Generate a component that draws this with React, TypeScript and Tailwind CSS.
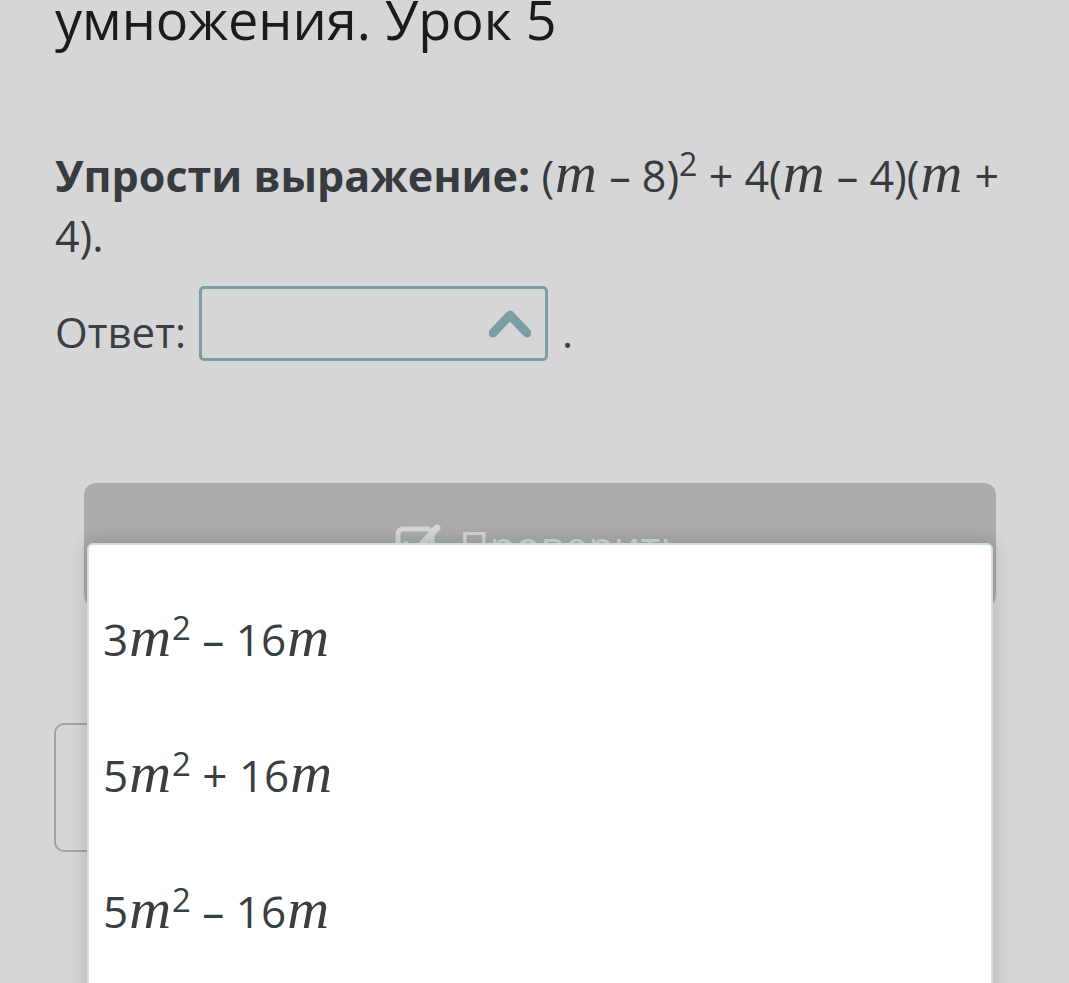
import type { ReactNode } from 'react';

const M = () => (
  <span className="mx-[1px] font-['Liberation_Serif',serif] italic text-[58px] leading-[0.8]">m</span>
);

const options: ReactNode[] = [
  <>3<M /><sup>2</sup> – 16<M /></>,
  <>5<M /><sup>2</sup> + 16<M /></>,
  <>5<M /><sup>2</sup> – 16<M /></>,
];

const App = () => {
  return (
    <div className="relative h-[983px] w-full overflow-hidden bg-[#d6d6d6] font-['Open_Sans',sans-serif]">
      <h1 className="-mt-[12px] pl-[55px] text-[54px] leading-[62px] text-[#1b1b1b] font-normal">
        умножения. Урок 5
      </h1>

      <p className="mt-[96px] pl-[55px] text-[43px] leading-[60px] text-[#363b40]">
        <span className="font-bold">Упрости выражение:</span> (<M /> – 8)<sup>2</sup> + 4(<M /> – 4)(
        <M /> +
        <br />
        4).
      </p>

      <div className="mt-[20px] flex items-start pl-[55px] text-[42px] leading-[60px] text-[#3b3f43]">
        <span className="mt-[16px]">Ответ:</span>
        <div className="ml-[13px] flex h-[75px] w-[349px] items-center justify-end rounded-[5px] border-[3px] border-[#7b9ea4] pr-[14px]">
          <svg width="42" height="28" viewBox="0 0 42 28" fill="none">
            <path d="M4 23 L21 5 L38 23" stroke="#7b9ea4" strokeWidth="9" strokeLinejoin="round" strokeLinecap="round" />
          </svg>
        </div>
        <span className="ml-[14px] mt-[16px]">.</span>
      </div>

      <div className="ml-[84px] mt-[121px] flex h-[124px] w-[912px] items-center justify-center gap-[18px] rounded-[12px] bg-[#ababab] text-[42px] text-[#d2d6d6]">
        <svg width="46" height="44" viewBox="0 0 46 44" fill="none">
          <rect x="3" y="6" width="34" height="34" rx="5" stroke="#d2d6d6" strokeWidth="5" />
          <path d="M11 22 L19 30 L42 5" stroke="#d2d6d6" strokeWidth="7" strokeLinecap="round" strokeLinejoin="round" />
        </svg>
        <span>Проверить</span>
      </div>

      <div className="ml-[54px] mt-[116px] h-[129px] w-[420px] rounded-[10px] border-2 border-[#9ea4a7]" />

      <div className="absolute left-[87px] top-[543px] h-[470px] w-[906px] rounded-t-[6px] border-2 border-[#cfdfe1] bg-white pt-[26px] shadow-[0_0_14px_4px_rgba(0,0,0,0.12)]">
        {options.map((opt, i) => (
          <div key={i} className="flex h-[136px] items-center pl-[14px] text-[44px] leading-[60px] text-[#3a3e42]">
            <span>{opt}</span>
          </div>
        ))}
      </div>
    </div>
  );
};

export default App;
